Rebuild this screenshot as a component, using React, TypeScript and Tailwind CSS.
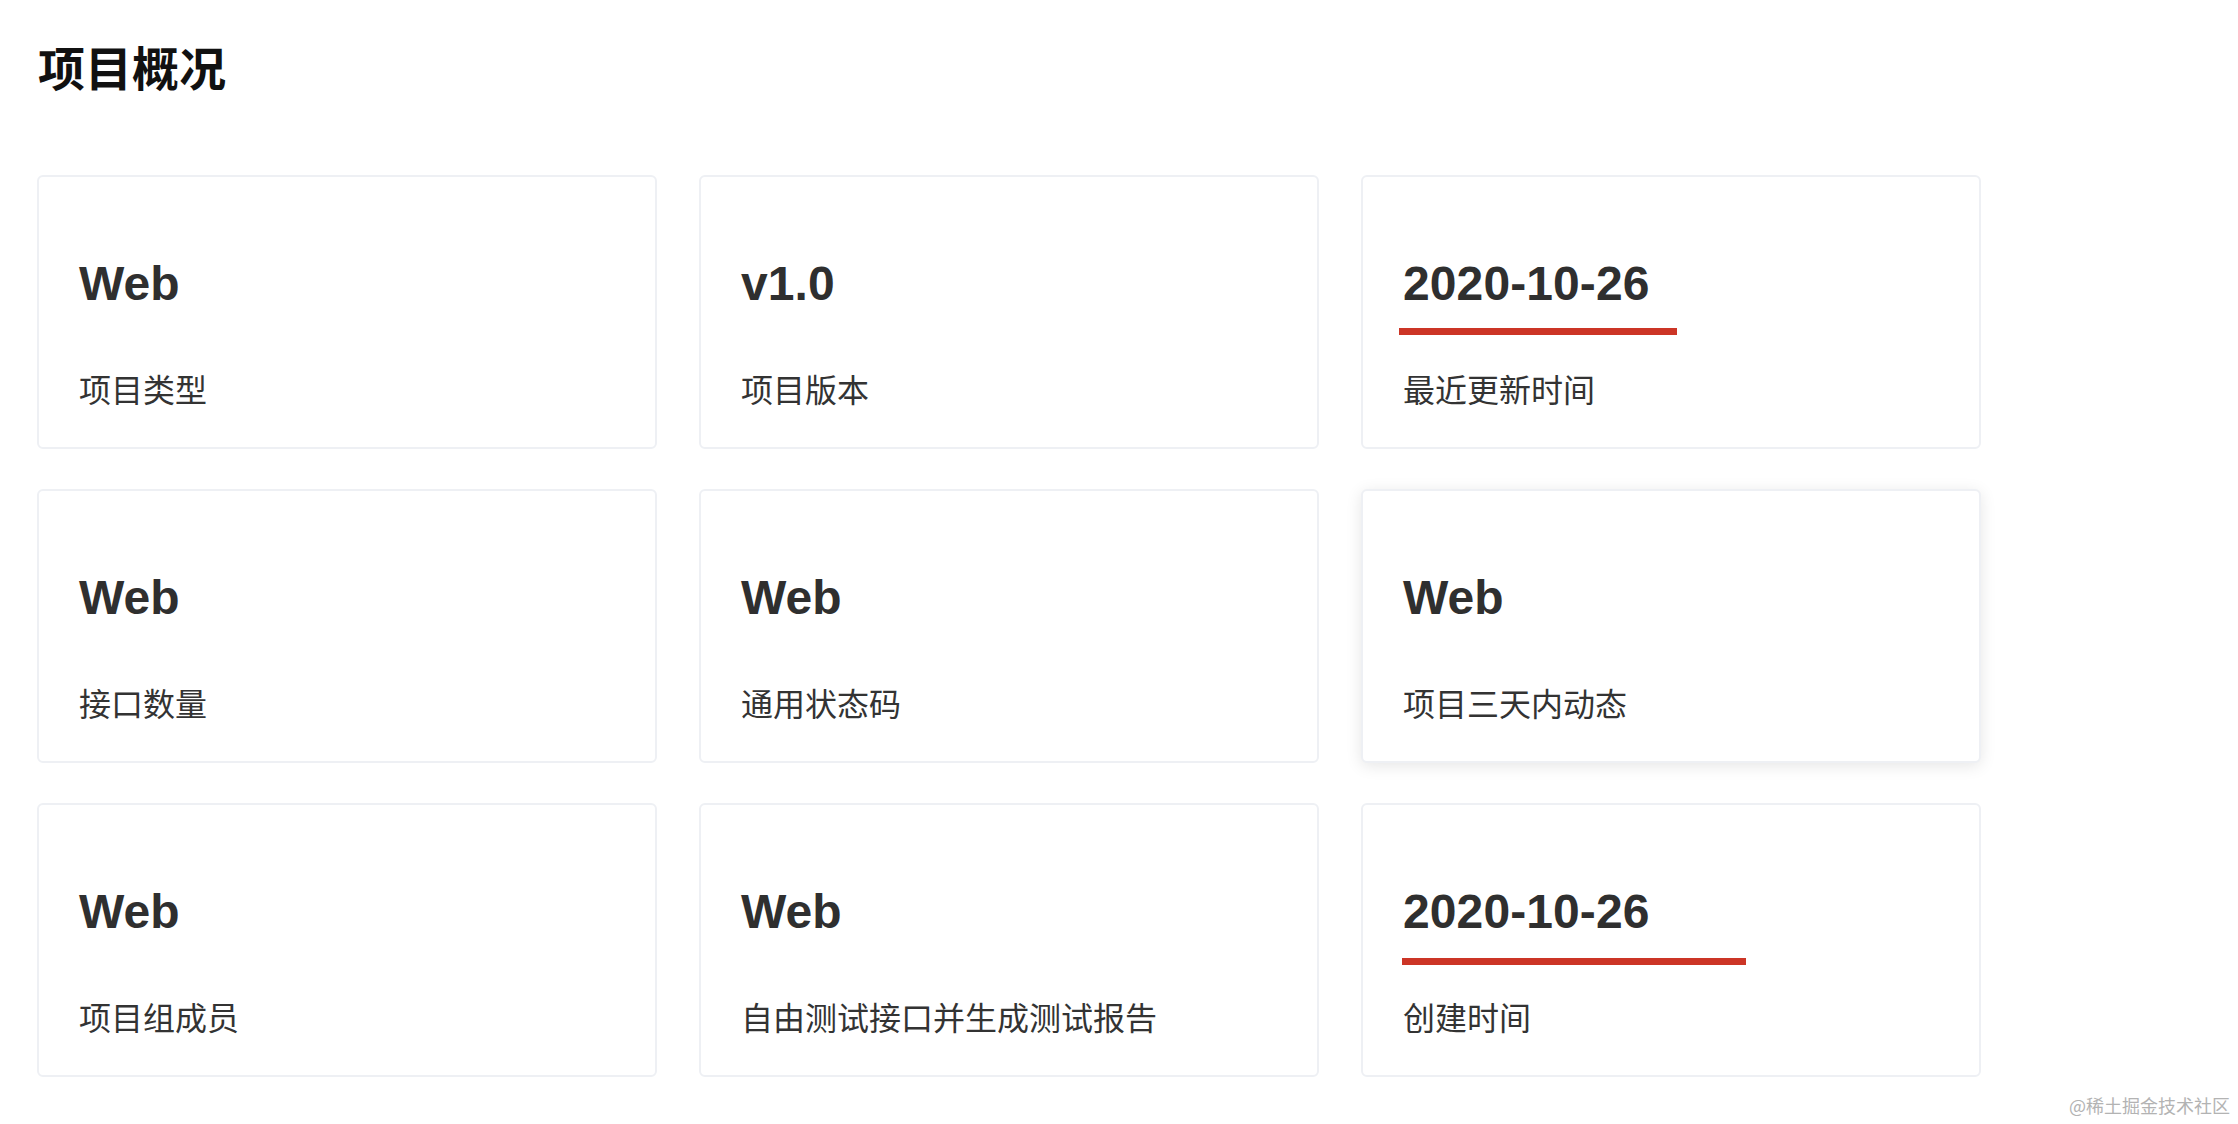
import React from "react";

type Card = {
  value: string;
  label: string;
  line?: { left: number; width: number; top: number };
  hover?: boolean;
};

const cards: Card[] = [
  { value: "Web", label: "项目类型" },
  { value: "v1.0", label: "项目版本" },
  { value: "2020-10-26", label: "最近更新时间", line: { left: 36, width: 278, top: 20 } },
  { value: "Web", label: "接口数量" },
  { value: "Web", label: "通用状态码" },
  { value: "Web", label: "项目三天内动态", hover: true },
  { value: "Web", label: "项目组成员" },
  { value: "Web", label: "自由测试接口并生成测试报告" },
  { value: "2020-10-26", label: "创建时间", line: { left: 39, width: 344, top: 22 } },
];

function StatCard({ card }: { card: Card }) {
  return (
    <div
      className={
        "relative h-[274px] w-[620px] rounded-[6px] border-2 border-[#eef0f4] bg-white " +
        (card.hover ? "shadow-[0_3px_16px_0_rgba(0,0,0,0.10)]" : "")
      }
    >
      <div className="pl-[40px] pt-[83px]">
        <div
          className="h-[48px] text-[48px] font-bold leading-[48px] tracking-[0.1px] text-[#2f2f2f]"
          style={{ fontFamily: '"Liberation Sans", Arial, sans-serif' }}
        >
          {card.value}
        </div>
        <div className="relative h-[64px]">
          {card.line && (
            <div
              className="absolute h-[7px] bg-[#cc3526]"
              style={{ left: card.line.left - 40, width: card.line.width, top: card.line.top }}
            />
          )}
        </div>
        <div
          className="h-[32px] text-[32px] leading-[32px] text-[#333333]"
          style={{ fontFamily: '"Noto Sans CJK SC", "Noto Sans", sans-serif' }}
        >
          {card.label}
        </div>
      </div>
    </div>
  );
}

export default function App() {
  return (
    <div className="relative h-[1124px] w-[2238px] overflow-hidden bg-white">
      <div className="pl-[37px] pt-[36px]">
        <h1
          className="pl-[1px] text-[47px] font-bold leading-[60px] text-[#111111]"
          style={{ fontFamily: '"Noto Sans CJK SC", sans-serif' }}
        >
          项目概况
        </h1>
        <div className="mt-[79px] grid w-max grid-cols-[620px_620px_620px] gap-x-[42px] gap-y-[40px]">
          {cards.map((c, i) => (
            <StatCard key={i} card={c} />
          ))}
        </div>
      </div>
      <div
        className="absolute bottom-[8px] right-[8px] text-[18px] leading-[22px] text-[#b3b3b3]"
        style={{ fontFamily: '"Noto Sans CJK SC", sans-serif' }}
      >
        @稀土掘金技术社区
      </div>
    </div>
  );
}
